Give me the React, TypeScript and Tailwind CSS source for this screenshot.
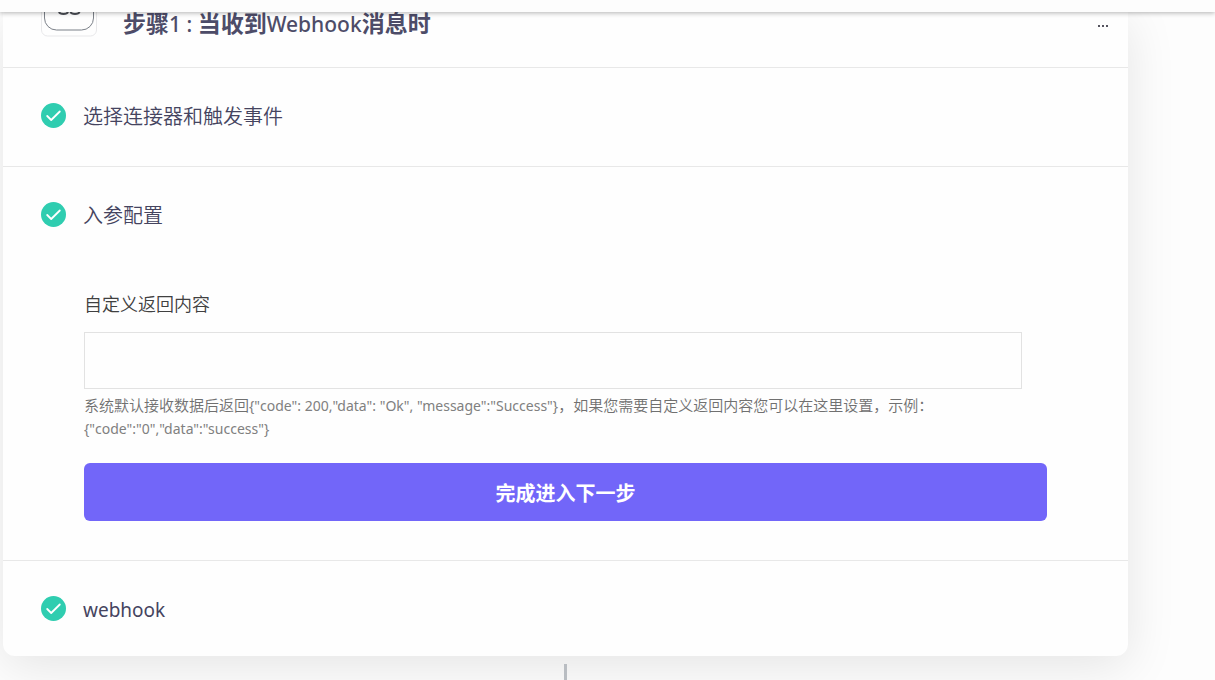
import type { ReactNode } from 'react';
import { clsx } from 'clsx';

function DoneIcon() {
  return (
    <svg viewBox="0 0 26 26" className="size-[26px] shrink-0" aria-hidden="true">
      <circle cx="12.5" cy="12.5" r="12.5" fill="#2fcdb0" />
      <path
        d="M6.2 13l4 4 8.600-8.500"
        fill="none"
        stroke="#fff"
        strokeWidth="1.8"
        strokeLinecap="round"
        strokeLinejoin="round"
      />
    </svg>
  );
}

// Bottom half of the connector logo, the rest is scrolled under the top bar.
function ConnectorLogo() {
  return (
    <svg viewBox="0 0 56 25" className="h-[25px] w-14 shrink-0" fill="none" aria-hidden="true">
      <path d="M.5 0v18a6 6 0 0 0 6 6h43a6 6 0 0 0 6-6V0" stroke="#e8e8ea" />
      <path d="M3.5 0v6a12 12 0 0 0 12 12h25a12 12 0 0 0 12-12V0" stroke="#7b8088" />
      <path d="M18 0c1 2.6 8 2.6 9 0M29.500 0c1 2.600 8 2.600 9 0" stroke="#4a4d54" strokeWidth="2" />
    </svg>
  );
}

function Step({
  title,
  last,
  children,
}: {
  title: ReactNode;
  last?: boolean;
  children?: ReactNode;
}) {
  return (
    <section className={clsx('pt-8', !last && 'border-b border-[#e8e8e8]')}>
      <button
        type="button"
        className="flex h-8 w-full items-center gap-4 px-[38px] text-left text-xl leading-7 font-[350] text-[#45445f]"
      >
        <DoneIcon />
        <span className="pt-0.5">{title}</span>
      </button>
      {children}
    </section>
  );
}

export default function App() {
  return (
    <div className="min-h-screen overflow-hidden bg-[#fdfdfd] font-['Noto_Sans','Noto_Sans_CJK_SC',sans-serif]">
      <header className="relative z-10 h-3 bg-[#fdfdfd] shadow-[0_1px_5px_rgba(0,0,0,0.3)]" />

      <main className="mr-[87px] ml-[3px]">
        <div className="rounded-b-xl bg-[#fefefe] shadow-[0_10px_50px_rgba(0,0,0,0.1)]">
          <div className="flex h-14 items-start border-b border-[#e8e8e8] pr-5 pl-[38px]">
            <ConnectorLogo />
            <h1 className="ml-[26px] flex-1 text-[23px] leading-[22px] font-bold text-[#4d4c68]">
              步骤<span className="text-[21px] font-medium">1 : </span>当收到
              <span className="text-[21px] font-medium">Webhook</span>消息时
            </h1>
            <button
              type="button"
              aria-label="更多"
              className="flex h-7 items-center gap-0.5"
            >
              <span className="size-0.5 bg-[#55545f]" />
              <span className="size-0.5 bg-[#55545f]" />
              <span className="size-0.5 bg-[#55545f]" />
            </button>
          </div>

          <Step title="选择连接器和触发事件">
            <div className="h-[34px]" />
          </Step>

          <Step title="入参配置">
            <form
              className="px-[81px] pt-[59px] pb-[39px]"
              onSubmit={(e) => e.preventDefault()}
            >
              <label
                htmlFor="custom-return"
                className="block text-lg leading-7 font-[350] text-[#404040]"
              >
                自定义返回内容
              </label>
              <div className="mt-[14px] mr-[25px]">
                <input
                  id="custom-return"
                  type="text"
                  aria-describedby="custom-return-help"
                  className="block h-[57px] w-full border border-[#e2e2e2] px-4 text-lg outline-none"
                />
                <p
                  id="custom-return-help"
                  className="mt-[5px] text-[15px] leading-[23px] font-[350] text-[#707070]"
                >
                  系统默认接收数据后返回
                  <span className="text-sm leading-[23px] font-normal text-[#808080]">
                    {'{"code": 200,"data": "Ok", "message":"Success"}'}
                  </span>
                  ，如果您需要自定义返回内容您可以在这里设置，示例：
                  <span className="text-sm leading-[23px] font-normal text-[#808080]">
                    {'{"code":"0","data":"success"}'}
                  </span>
                </p>
              </div>
              <button
                type="submit"
                className="mt-[23px] block h-[58px] w-full rounded-md bg-[#7266f9] pt-1 text-xl font-bold text-white"
              >
                完成进入下一步
              </button>
            </form>
          </Step>

          <Step title={<span className="text-[19px] font-normal">webhook</span>} last>
            <div className="h-[31px]" />
          </Step>
        </div>

        <div className="mx-auto mt-2 h-4 w-[3px] bg-[#b9bdc2]" />
      </main>
    </div>
  );
}
